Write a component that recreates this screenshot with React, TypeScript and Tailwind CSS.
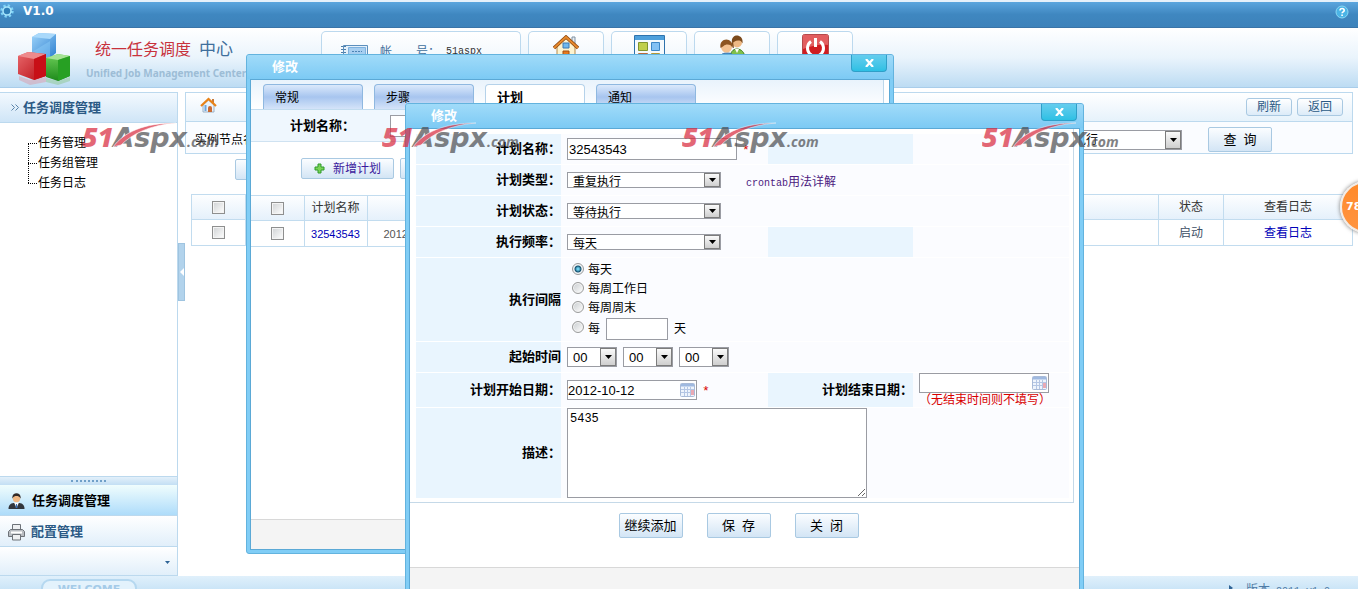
import { useState } from 'react'
import type { ReactNode } from 'react'

const plans = [{ id: 1, name: '32543543', date: '2012-10-12' }]
const tabs = ['常规', '步骤', '计划', '通知']
const intervals = ['每天', '每周工作日', '每周周末']

const labelText = 'text-[13px] leading-[16px] font-bold text-black'
const buttonLook =
  'border border-[#a9c9e2] rounded-[2px] bg-gradient-to-b from-[#fbfdff] to-[#d3e5f5] text-black whitespace-pre'

/* ---------- icons ---------- */

function GearIcon() {
  return (
    <svg width="14" height="14" viewBox="0 0 14 14" fill="none">
      <circle cx="7" cy="7" r="5.4" stroke="#7fd3f7" strokeWidth="2.6" strokeDasharray="2.2 2.04" />
      <circle cx="7" cy="7" r="4" fill="#2f7fb8" stroke="#a5e4fb" strokeWidth="1.6" />
    </svg>
  )
}

function HelpIcon() {
  return (
    <svg width="14" height="14" viewBox="0 0 14 14" fill="none">
      <circle cx="7" cy="7" r="6" fill="#4bb4e6" stroke="#8ad8f5" />
      <path d="M5 5.4c0-2.6 4.2-2.5 4.2 0 0 1.5-2.1 1.4-2.1 2.8M7.1 9.6v1.4" stroke="#fff" strokeWidth="1.6" />
    </svg>
  )
}

function CubesLogo() {
  return (
    <svg width="56" height="56" viewBox="0 0 56 56">
      <defs>
        <linearGradient id="cubeBlue" x1="0" y1="0" x2="1" y2="1">
          <stop offset="0" stopColor="#9ed4fa" />
          <stop offset="1" stopColor="#2e80d0" />
        </linearGradient>
        <linearGradient id="cubeRed" x1="0" y1="0" x2="1" y2="1">
          <stop offset="0" stopColor="#e8686c" />
          <stop offset="1" stopColor="#b80d14" />
        </linearGradient>
        <linearGradient id="cubeGreen" x1="0" y1="0" x2="0" y2="1">
          <stop offset="0" stopColor="#6cce58" />
          <stop offset="1" stopColor="#1d8a1b" />
        </linearGradient>
      </defs>
      <path d="M1 46l11 4 16-3v5l-16 3-11-5z" fill="#e08a96" opacity=".4" />
      <path d="M28 48l12 3 12-4v4l-12 4-12-3z" fill="#8ec790" opacity=".5" />
      <path d="M14 7l7-4 17 1v19l-6 5-18-1z" fill="url(#cubeBlue)" />
      <path d="M14 7l7-4 17 1-6 5z" fill="#a9d9fb" />
      <path d="M14 22l18-11v17l-18-1z" fill="#8ccbf7" opacity=".5" />
      <path d="M0 26l10-4 18 2v22l-12 4L0 44z" fill="url(#cubeRed)" />
      <path d="M0 26l10-4 18 2-12 5z" fill="#ee8a8c" />
      <path d="M16 29l12-5v22l-12 4z" fill="#c80f17" />
      <path d="M28 28l12-4 12 2v20l-12 5-12-4z" fill="url(#cubeGreen)" />
      <path d="M28 28l12-4 12 2-12 4z" fill="#a5e295" />
      <path d="M40 30l12-4v20l-12 5z" fill="#27a023" />
    </svg>
  )
}

function HomeIcon({ size }: { size: number }) {
  return (
    <svg width={size} height={size} viewBox="0 0 26 26">
      <path d="M19 2h3v9h-3z" fill="#e8eef4" stroke="#7d8fa0" />
      <path d="M4 12l9-9 9 9v12H4z" fill="#fdf3cf" stroke="#b58a4b" />
      <path d="M1 13L13 2l12 11" fill="none" stroke="#8f4a12" strokeWidth="3.4" />
      <path d="M1 13L13 2l12 11" fill="none" stroke="#e88a2c" strokeWidth="1.8" />
      <path d="M10 8h6v5h-6z" fill="#6fb8ee" stroke="#3b78b4" />
      <path d="M10 16h6v8h-6z" fill="#e67a1e" stroke="#a34c10" />
    </svg>
  )
}

function SmallHomeIcon() {
  return (
    <svg width="17" height="17" viewBox="0 0 17 17">
      <path d="M12 2h2v4h-2z" fill="#c77b3d" />
      <path d="M3 8l5.5-5L14 8v7H3z" fill="#eaf3fb" stroke="#9bb1c6" />
      <path d="M1 9l7.5-7L16 9" fill="none" stroke="#e98318" strokeWidth="2.2" />
      <path d="M8 15v-4a2 2 0 014 0v4z" fill="#c96b33" />
      <path d="M4 9h3M4 11h3M4 13h3M5.500 8v6" stroke="#6ea6dc" />
    </svg>
  )
}

function CardIcon() {
  return (
    <svg width="28" height="22" viewBox="0 0 28 22">
      <path d="M3.500.5h24v21h-24z" fill="#e4f1fb" stroke="#5c8fbd" />
      <path d="M8.500 2.500h17v15h-17z" fill="#a6cef0" stroke="#7db1de" />
      <path d="M12 6.500h10M12 10.500h10" stroke="#4c83b5" strokeDasharray="2 1" />
      <path d="M1 1.500h5M1 4.500h5M1 7.500h5M1 10.500h5" stroke="#4f7ea8" strokeDasharray="2 1" />
    </svg>
  )
}

function WindowIcon() {
  return (
    <svg width="31" height="28" viewBox="0 0 31 28">
      <path d="M.5.5h30v27H.5z" fill="#f6fafd" stroke="#2f73ad" />
      <path d="M1 1h29v4H1z" fill="#4ea0dc" />
      <path d="M4.500 7.500h9v8h-9z" fill="#c0cf4b" stroke="#7f9430" />
      <path d="M17.500 7.500h8v8h-8z" fill="#83c1f4" stroke="#3d86c6" />
      <path d="M4.500 18.500h9v7h-9z" fill="#f0955a" stroke="#b86a3c" />
      <path d="M17.500 18.500h8v7h-8z" fill="#e8ce62" stroke="#b39834" />
    </svg>
  )
}

function UsersIcon() {
  return (
    <svg width="28" height="28" viewBox="0 0 28 28">
      <path d="M12 24c0-7 3-10 7-10s8 3 8 10z" fill="#7fc04a" stroke="#42821f" />
      <path d="M17 14l2 4 2-4z" fill="#fff" />
      <circle cx="19" cy="7.500" r="5" fill="#eeb985" />
      <path d="M14 8C12-2 26-2 24.500 8.500 23.500 6 22 5.500 20 5.500c-3 0-4 2-6 2.500z" fill="#7c4a1c" />
      <path d="M14 8c0 4 1 5 2 5l-1-6z" fill="#7c4a1c" />
      <path d="M1 27c0-7 3-9 8-9s8 2 8 9z" fill="#5ea3dc" stroke="#2f6ca6" />
      <circle cx="8.500" cy="12" r="5.500" fill="#f3c190" />
      <path d="M2.500 13C.5 1.500 16 1.500 14.500 13c-1-2.500-2.500-3.500-5-3.500C6 9.500 5 12 2.500 13z" fill="#8d5420" />
    </svg>
  )
}

function PowerIcon() {
  return (
    <svg width="27" height="27" viewBox="0 0 27 27">
      <rect x=".5" y=".5" width="26" height="26" rx="2" fill="#cf1d22" stroke="#b54a4c" />
      <path d="M1 1h25v10c-8-1-17 1-25 4z" fill="#ea7a7a" opacity=".7" />
      <path d="M9 7.500a8 8 0 109 0" fill="none" stroke="#fff" strokeWidth="3" />
      <path d="M13.500 4v9" stroke="#fff" strokeWidth="3" />
    </svg>
  )
}

function ManagerIcon() {
  return (
    <svg width="17" height="17" viewBox="0 0 17 17">
      <path d="M.5 16c0-4 2-5.500 5-6h6c3 .5 5 2 5 6z" fill="#33363c" />
      <path d="M6 9.500h5L8.500 15z" fill="#fff" />
      <path d="M8 11h1l.5 4h-2z" fill="#3c6fb0" />
      <circle cx="8.500" cy="5.500" r="3.700" fill="#f0b884" />
      <path d="M4.300 5.500C3.500-1.500 13.500-1.500 12.700 5.500 11.500 3.500 10 3 8.500 3S5.500 3.500 4.300 5.500z" fill="#332b28" />
    </svg>
  )
}

function PrinterIcon() {
  return (
    <svg width="17" height="17" viewBox="0 0 17 17" fill="#eef0f2" stroke="#6d7278">
      <path d="M4.500.5h8v6h-8z" />
      <path d="M2.500 5.500h12l2 2v5h-16v-5z" fill="#b9bdc2" />
      <path d="M4.500 10.500h8v5.500h-8z" />
      <path d="M3 8.500h11" stroke="#fff" strokeWidth="2" />
    </svg>
  )
}

function PlusIcon() {
  return (
    <svg width="11" height="11" viewBox="0 0 11 11">
      <path d="M4 1h3v3h3v3H7v3H4V7H1V4h3z" fill="#7ad457" stroke="#2f9a2b" />
    </svg>
  )
}

function CalendarIcon() {
  return (
    <svg width="15" height="14" viewBox="0 0 15 14">
      <rect x=".5" y=".5" width="14" height="13" rx="1" fill="#eef4fc" stroke="#a9bbd8" />
      <path d="M1 1h13v2.500H1z" fill="#9fb9e0" />
      <path d="M1 6.500h13M1 9.500h13M4.500 4v9M7.500 4v9M10.500 4v9" stroke="#b4c6e4" />
      <path d="M11 7h3v5h-3z" fill="#e9a9b4" />
    </svg>
  )
}

/* ---------- form controls ---------- */

interface SelectProps {
  id?: string
  label?: string
  value: string
  className: string
  fieldClass: string
}

function Select({ id, label, value, className, fieldClass }: SelectProps) {
  return (
    <span className={`relative block shrink-0 ${className}`}>
      <select
        id={id}
        aria-label={label}
        defaultValue={value}
        className={`block w-full h-full appearance-none rounded-none border border-[#9a9ca3] bg-white pl-[5px] text-black outline-none ${fieldClass}`}
      >
        <option>{value}</option>
      </select>
      <span className="pointer-events-none absolute inset-y-px right-px flex w-4 items-center justify-center border border-[#7c7c7c] bg-gradient-to-b from-[#fafafa] to-[#cfcfcf]">
        <svg width="7" height="4" viewBox="0 0 7 4">
          <path d="M0 0h7L3.500 4z" fill="#000" />
        </svg>
      </span>
    </span>
  )
}

function DateInput({ id, value }: { id: string; value: string }) {
  return (
    <span className="relative block w-[130px] shrink-0">
      <input
        id={id}
        type="text"
        defaultValue={value}
        className="block h-5 w-full border border-[#9a9ca3] bg-white text-[13px] text-black outline-none"
      />
      <span className="pointer-events-none absolute right-0.5 top-[3px]">
        <CalendarIcon />
      </span>
    </span>
  )
}

function Checkbox({ label }: { label: string }) {
  return (
    <input
      type="checkbox"
      aria-label={label}
      className="block mx-auto size-[13px] appearance-none border border-[#8e8f8f] bg-gradient-to-br from-[#cfd2d4] to-white shadow-[inset_0_0_0_1px_#f4f4f4] checked:from-[#3b6ea5]"
    />
  )
}

function Radio({ id, defaultChecked }: { id: string; defaultChecked?: boolean }) {
  return (
    <input
      id={id}
      type="radio"
      name="interval"
      defaultChecked={defaultChecked}
      className="mb-1 size-3 shrink-0 appearance-none rounded-full border border-[#9a9b9b] bg-gradient-to-br from-[#c8cccf] to-white shadow-[inset_0_0_0_1px_#f4f4f4] checked:bg-[radial-gradient(circle,#6fd0ee_0_1px,#14506f_3px,#e8f0f4_4px)]"
    />
  )
}

/* ---------- dialog ---------- */

interface DialogProps {
  title: string
  className: string
  onClose: () => void
  children: ReactNode
}

function Dialog({ title, className, onClose, children }: DialogProps) {
  return (
    <section
      role="dialog"
      aria-label={title}
      className={`absolute flex flex-col rounded-[3px] border border-[#63b3de] bg-[#80cdf6] px-[3px] pb-[3px] ${className}`}
    >
      <header className="-mx-[3px] flex h-6 shrink-0 items-start justify-between rounded-t-[2px] bg-gradient-to-b from-[#a0dbf9] to-[#7ccaf4] pl-[25px] pr-1.5">
        <h2 className="text-[13px] leading-[23px] font-bold text-white">{title}</h2>
        <button
          type="button"
          aria-label="关闭"
          onClick={onClose}
          className="flex h-[17px] w-9 items-center justify-center rounded-b-[4px] border border-t-0 border-[#2f9fc8] bg-gradient-to-b from-[#63cdee] to-[#2cc0e4]"
        >
          <svg width="9" height="8" viewBox="0 0 9 8">
            <path d="M1 0l7 8M8 0L1 8" stroke="#fff" strokeWidth="2.2" />
          </svg>
        </button>
      </header>
      <div className="flex flex-1 flex-col border border-[#5ba9d6] bg-white">{children}</div>
    </section>
  )
}

function PlanListDialog({ onClose }: { onClose: () => void }) {
  const [active, setActive] = useState('计划')
  return (
    <Dialog title="修改" className="left-[246px] top-[54px] h-[500px] w-[648px]" onClose={onClose}>
      <div className="mr-[5px] border-r border-[#bcd7ea]">
        <div role="tablist" className="flex gap-[11px] border-b border-[#c2dcef] bg-gradient-to-b from-[#e9f3fc] to-white pl-3 pt-1">
          {tabs.map((tab) => (
            <button
              key={tab}
              type="button"
              role="tab"
              aria-selected={tab === active}
              onClick={() => setActive(tab)}
              className={`h-[25px] w-[100px] rounded-t-[4px] border border-b-0 pl-[11px] pt-0.5 text-left text-black ${
                tab === active
                  ? 'border-[#b5d2ea] bg-white text-[13px] font-bold'
                  : 'border-[#8fb8e0] bg-gradient-to-b from-[#dbe9fb] via-[#a7c5ef] to-[#d5e4f9] text-[12px]'
              }`}
            >
              {tab}
            </button>
          ))}
        </div>
        <div className="flex h-8 items-center border-b border-[#cfe2f1] bg-[#eff7fe]">
          <label htmlFor="listName" className={`w-[104px] text-right ${labelText}`}>
            计划名称：
          </label>
          <input id="listName" type="text" className="ml-[35px] h-[22px] w-[170px] border border-[#9a9ca3] bg-white px-px outline-none" />
        </div>
      </div>
      <div className="flex gap-1.5 pl-[50px] pt-4">
        <button type="button" className={`flex h-[21px] w-[93px] items-center justify-center gap-2 ${buttonLook}`}>
          <PlusIcon />
          <span className="text-[12px] text-[#3b1a9c]">新增计划</span>
        </button>
        <button type="button" aria-label="删除计划" className={`h-[21px] w-[93px] ${buttonLook}`} />
      </div>
      <table className="mt-4 w-full table-fixed border-collapse text-center text-[12px] leading-[16px]">
        <thead>
          <tr className="h-[25px] bg-gradient-to-b from-[#fdfeff] to-[#e4f0fb] text-[#333]">
            <th className="w-[53px] border border-l-0 border-[#c2dcef] font-normal">
              <Checkbox label="全选" />
            </th>
            <th className="w-[63px] border border-[#c2dcef] font-normal">计划名称</th>
            <th className="border border-[#c2dcef]" />
          </tr>
        </thead>
        <tbody>
          {plans.map((plan) => (
            <tr key={plan.id} className="h-[26px]">
              <td className="border border-l-0 border-[#c2dcef]">
                <Checkbox label={plan.name} />
              </td>
              <td className="border border-[#c2dcef] text-[11px]">
                <a href="#plan" className="text-[#0000b8]">
                  {plan.name}
                </a>
              </td>
              <td className="border border-[#c2dcef] pl-4 text-left text-[11px] text-[#555]">{plan.date}</td>
            </tr>
          ))}
        </tbody>
      </table>
      <div className="mt-auto h-[30px] border-t border-[#d8d8d8] bg-[#f4f4f4]" />
    </Dialog>
  )
}

function LabelCell({ htmlFor, children }: { htmlFor?: string; children?: ReactNode }) {
  return (
    <div className="flex items-center justify-end bg-[#e9f5fe]">
      {children && (
        <label htmlFor={htmlFor} className={labelText}>
          {children}
        </label>
      )}
    </div>
  )
}

function FieldCell({ wide, children }: { wide?: boolean; children?: ReactNode }) {
  return (
    <div className={`flex items-center bg-[#fbfcff] pl-1.5 ${wide ? 'col-span-3' : ''}`}>{children}</div>
  )
}

const Required = () => (
  <span className="ml-[5px] pt-1 font-['Liberation_Mono'] text-[13px] leading-[16px] text-[#d80000]">*</span>
)

function PlanFormDialog({ onClose }: { onClose: () => void }) {
  const planSelect = 'h-4 w-[154px]'
  const planSelectText = 'pt-0.5 text-[12px] leading-[14px]'
  return (
    <Dialog title="修改" className="left-[405px] top-[103px] w-[679px]" onClose={onClose}>
      <form className="flex flex-col" onSubmit={(e) => e.preventDefault()}>
        <div className="mr-[5px] grid grid-cols-[145px_207px_145px_1fr] grid-rows-[30px_30px_30px_30px_83px_30px_34px_90px] gap-y-px border-b border-r border-[#c5d9e8] pb-1 pl-1.5 pr-1 pt-[5px]">
          <LabelCell htmlFor="planName">计划名称：</LabelCell>
          <FieldCell>
            <input
              id="planName"
              type="text"
              defaultValue="32543543"
              className="h-[22px] w-[170px] border border-[#9a9ca3] bg-white px-px text-[13px] text-black outline-none"
            />
            <Required />
          </FieldCell>
          <LabelCell />
          <FieldCell />

          <LabelCell htmlFor="planType">计划类型：</LabelCell>
          <FieldCell wide>
            <Select id="planType" value="重复执行" className={planSelect} fieldClass={planSelectText} />
            <a href="#crontab" className="ml-[25px] pt-1 text-[12px] text-[#4b1a80]">
              <span className="font-['Liberation_Mono'] text-[10px]">crontab</span>用法详解
            </a>
          </FieldCell>

          <LabelCell htmlFor="planState">计划状态：</LabelCell>
          <FieldCell wide>
            <Select id="planState" value="等待执行" className={planSelect} fieldClass={planSelectText} />
          </FieldCell>

          <LabelCell htmlFor="planRate">执行频率：</LabelCell>
          <FieldCell>
            <Select id="planRate" value="每天" className={planSelect} fieldClass={planSelectText} />
          </FieldCell>
          <LabelCell />
          <FieldCell />

          <LabelCell htmlFor="interval0">执行间隔</LabelCell>
          <FieldCell wide>
            <div role="radiogroup" aria-label="执行间隔" className="flex flex-col pl-[5px] pt-0.5 text-[12px] leading-[19px] text-black">
              {intervals.map((item, idx) => (
                <span key={item} className="flex items-center gap-1">
                  <Radio id={`interval${idx}`} defaultChecked={idx === 0} />
                  <label htmlFor={`interval${idx}`}>{item}</label>
                </span>
              ))}
              <span className="flex items-center gap-1">
                <Radio id="intervalDays" />
                <label htmlFor="intervalDays">每</label>
                <input
                  type="text"
                  aria-label="间隔天数"
                  className="mx-0.5 h-[22px] w-[62px] border border-[#9a9ca3] bg-white px-px text-[13px] outline-none"
                />
                <span>天</span>
              </span>
            </div>
          </FieldCell>

          <LabelCell htmlFor="startHour">起始时间</LabelCell>
          <FieldCell wide>
            <div className="flex gap-1.5">
              <Select id="startHour" value="00" className="h-5 w-[50px]" fieldClass="text-[13px]" />
              <Select label="分" value="00" className="h-5 w-[50px]" fieldClass="text-[13px]" />
              <Select label="秒" value="00" className="h-5 w-[50px]" fieldClass="text-[13px]" />
            </div>
          </FieldCell>

          <LabelCell htmlFor="beginDate">计划开始日期：</LabelCell>
          <FieldCell>
            <DateInput id="beginDate" value="2012-10-12" />
            <Required />
          </FieldCell>
          <LabelCell htmlFor="endDate">计划结束日期：</LabelCell>
          <FieldCell>
            <div>
              <DateInput id="endDate" value="" />
              <p className="whitespace-nowrap text-[12px] leading-[14px] text-[#d80000]">（无结束时间则不填写）</p>
            </div>
          </FieldCell>

          <LabelCell htmlFor="remark">描述：</LabelCell>
          <FieldCell wide>
            <textarea
              id="remark"
              defaultValue="5435"
              className="block h-full w-[300px] border border-[#9a9ca3] bg-white px-0.5 py-[3px] font-['Liberation_Mono'] text-[12px] leading-[14px] text-black outline-none"
            />
          </FieldCell>
        </div>

        <div className="flex justify-center gap-6 pb-[29px] pt-[10px] pr-3 text-[13px]">
          <button type="button" className={`h-[25px] w-16 ${buttonLook}`}>继续添加</button>
          <button type="submit" className={`h-[25px] w-16 ${buttonLook}`}>{'保  存'}</button>
          <button type="button" onClick={onClose} className={`h-[25px] w-16 ${buttonLook}`}>{'关  闭'}</button>
        </div>
        <div className="h-[30px] border-t border-[#d8d8d8] bg-[#f4f4f4]" />
      </form>
    </Dialog>
  )
}

/* ---------- page ---------- */

function TopBar() {
  return (
    <div className="flex h-7 shrink-0 items-start justify-between border-b border-t-2 border-b-[#3a74a8] border-t-[#e6f1fa] bg-gradient-to-b from-[#5ba6de] via-[#3f87c0] to-[#3d82ba] pr-[9px] pt-0.5">
      <div className="flex items-start gap-[9px]">
        <GearIcon />
        <span className="font-['DejaVu_Sans'] text-[12px] leading-[14px] font-bold text-white">V1.0</span>
      </div>
      <button type="button" aria-label="帮助" className="pt-px">
        <HelpIcon />
      </button>
    </div>
  )
}

function Header() {
  const box = 'flex justify-center h-full rounded-t-[5px] border border-b-0 border-[#bcd9ee] bg-gradient-to-b from-white to-[#e2f0fa]'
  return (
    <header className="flex h-[60px] shrink-0 border-b border-[#a9cdea] bg-gradient-to-b from-white via-[#eaf4fc] to-[#bddcf3]">
      <div className="flex w-[321px] shrink-0 pl-[18px] pt-0.5">
        <CubesLogo />
        <div className="pl-3 pt-[10px]">
          <h1 className="flex gap-2 pl-[9px] text-[16px] leading-[20px] text-[#c8323c]">
            统一任务调度 <span className="text-[17px] text-[#3f6f9c]">中心</span>
          </h1>
          <p className="mt-1 whitespace-nowrap font-['Noto_Sans'] text-[10px] leading-[18px] font-bold text-[#9dbdd6]">
            Unified Job Management Center
          </p>
        </div>
      </div>
      <nav className="flex gap-[7px] pt-[3px]">
        <div className={`w-[200px] ${box}`}>
          <div className="flex w-full items-start gap-3 pl-[18px] pt-[13px] text-[12px] leading-[14px] text-[#3f6f9c]">
            <CardIcon />
            <span>帐</span>
            <span className="ml-3">号：</span>
            <span className="-ml-1.5 font-['Liberation_Mono'] text-[10px] text-[#333]">51aspx</span>
          </div>
        </div>
        <a href="#home" aria-label="首页" className={`w-[76px] pt-[3px] ${box}`}><HomeIcon size={26} /></a>
        <a href="#desk" aria-label="桌面" className={`w-[76px] pt-[3px] ${box}`}><WindowIcon /></a>
        <a href="#users" aria-label="用户" className={`w-[76px] pt-[3px] ${box}`}><UsersIcon /></a>
        <a href="#exit" aria-label="退出" className={`w-[76px] pt-0.5 ${box}`}><PowerIcon /></a>
      </nav>
    </header>
  )
}

function Sidebar() {
  return (
    <aside className="flex w-[178px] shrink-0 flex-col border-r border-t border-[#bcd9ee]">
      <h2 className="flex h-[30px] items-center gap-1 border-b border-[#bcd9ee] bg-gradient-to-b from-[#f3f9fe] to-[#cfe5f7] pl-[11px] text-[13px] font-bold text-[#2b5a85]">
        <svg width="8" height="7" viewBox="0 0 8 7" fill="none" stroke="#5a83a8">
          <path d="M.5.5l3 3-3 3M4.500.5l3 3-3 3" />
        </svg>
        任务调度管理
      </h2>
      <ul className="relative ml-7 mt-[10px] text-[12px] leading-[20px] text-black">
        <li className="absolute bottom-[10px] left-0 top-[10px] border-l border-dotted border-black" aria-hidden="true" />
        {['任务管理', '任务组管理', '任务日志'].map((item) => (
          <li key={item} className="flex items-center gap-px">
            <span className="w-[9px] border-t border-dotted border-black" />
            <a href="#task">{item}</a>
          </li>
        ))}
      </ul>
      <div className="mt-auto text-[13px] font-bold">
        <div className="flex h-[9px] items-center justify-center border-t border-[#bcd9ee] bg-gradient-to-b from-[#e3f0fa] to-[#c3dff4]">
          <span className="w-[35px] border-t-2 border-dotted border-[#6f9fc8]" />
        </div>
        <a href="#jobs" className="flex h-[31px] items-center gap-[7px] border-b border-[#bcd9ee] bg-gradient-to-b from-[#f0fdfd] to-[#aedcfa] pl-2 pt-0.5 text-black">
          <ManagerIcon />
          任务调度管理
        </a>
        <a href="#config" className="flex h-[31px] items-center gap-1.5 border-b border-[#bcd9ee] bg-gradient-to-b from-white to-[#e1effa] pl-2 pt-0.5 text-[#2b5a85]">
          <PrinterIcon />
          配置管理
        </a>
        <div className="flex h-[29px] items-center justify-end border-b border-[#bcd9ee] bg-gradient-to-b from-white to-[#e1effa] pr-[7px] pt-0.5">
          <svg width="5" height="3" viewBox="0 0 5 3">
            <path d="M0 0h5L2.500 3z" fill="#2f6496" />
          </svg>
        </div>
      </div>
    </aside>
  )
}

function Content() {
  const smallButton = 'h-[18px] w-[46px] rounded-[3px] border border-[#a9c9e2] bg-gradient-to-b from-white to-[#dcebf8] text-[12px] leading-[16px] text-[#2b5a85]'
  const cell = 'border border-[#c2dcef] font-normal'
  return (
    <main className="min-w-0 flex-1 pr-[5px]">
      <div className="border border-[#bcd9ee]">
        <div className="flex h-[29px] items-center justify-between border-b border-[#bcd9ee] bg-gradient-to-b from-white to-[#e6f2fb] pl-[14px] pr-[9px]">
          <a href="#home" aria-label="首页" className="pb-1">
            <SmallHomeIcon />
          </a>
          <div className="flex gap-[5px]">
            <button type="button" className={smallButton}>刷新</button>
            <button type="button" className={smallButton}>返回</button>
          </div>
        </div>
        <div className="flex h-[31px] items-center justify-between bg-[#fafcff] pl-[9px] pr-20 pt-1">
          <label htmlFor="nodeState" className="text-[12px] text-black">实例节点名称：</label>
          <div className="flex items-center gap-[26px]">
            <Select id="nodeState" value="等待执行" className="h-5 w-[138px]" fieldClass="text-[12px]" />
            <button type="button" className={`h-[25px] w-16 text-[13px] ${buttonLook}`}>{'查  询'}</button>
          </div>
        </div>
      </div>
      <div className="pl-[50px] pt-[5px]">
        <button type="button" aria-label="新增任务" className={`block h-[21px] w-[93px] ${buttonLook}`} />
      </div>
      <div className="pl-1.5 pt-[14px]">
        <table className="w-full table-fixed border-collapse text-center text-[12px] leading-[16px]">
          <thead>
            <tr className="h-[25px] bg-gradient-to-b from-[#fdfeff] to-[#e4f0fb] text-[#333]">
              <th className={`w-[54px] ${cell}`}><Checkbox label="全选任务" /></th>
              <th className={cell} />
              <th className={`w-[65px] ${cell}`}>状态</th>
              <th className={`w-[129px] ${cell}`}>查看日志</th>
            </tr>
          </thead>
          <tbody>
            <tr className="h-[26px] text-[#3d4f66]">
              <td className={cell}><Checkbox label="任务" /></td>
              <td className={cell} />
              <td className={cell}>启动</td>
              <td className={cell}><a href="#log" className="text-[#0000b8]">查看日志</a></td>
            </tr>
          </tbody>
        </table>
      </div>
    </main>
  )
}

function Footer() {
  return (
    <footer className="flex h-[13px] shrink-0 justify-between overflow-hidden bg-gradient-to-b from-[#e0f0fb] to-[#cbe5f7] pl-[41px] pr-7 pt-[3px]">
      <span className="h-5 w-24 rounded-[9px] border-2 border-[#b5d8f0] bg-[#e3f2fc] text-center font-['DejaVu_Sans'] text-[11px] leading-[17px] font-bold text-[#a5cbe8]">
        WELCOME
      </span>
      <span className="flex h-5 items-start gap-3 pt-1 text-[12px] leading-[14px] text-[#4f7ba5]">
        <svg width="5" height="8" viewBox="0 0 5 8">
          <path d="M0 2l4 3-4 3z" fill="#2f6496" />
        </svg>
        <span>
          版本<span className="font-['Liberation_Mono'] text-[10px]"> 2011 v1.0</span>
        </span>
      </span>
    </footer>
  )
}

function Watermark() {
  return (
    <div className="relative w-[300px] shrink-0 whitespace-nowrap leading-[30px] font-bold italic opacity-70">
      <span className="font-['Open_Sans'] text-[27px] font-extrabold text-[#d8283c]">51</span>
      <span className="font-['DejaVu_Sans'] text-[27px] text-[#4c4c50]">Aspx</span>
      <span className="font-['Open_Sans'] text-[14px] text-[#4c4c50]">.com</span>
      <svg className="absolute left-[30px] top-0" width="66" height="28" viewBox="0 0 66 28">
        <path d="M1 25C12 10 32 1 64 1 38 3 20 12 9 23z" fill="#d8283c" stroke="#fff" strokeWidth=".6" />
      </svg>
    </div>
  )
}

export default function App() {
  const [listOpen, setListOpen] = useState(true)
  const [formOpen, setFormOpen] = useState(true)

  return (
    <div className="relative flex h-screen flex-col overflow-hidden bg-white font-['Liberation_Sans','Noto_Sans_CJK_SC',sans-serif]">
      <TopBar />
      <Header />
      <div className="flex min-h-0 flex-1 pt-1">
        <Sidebar />
        <div className="flex w-[7px] shrink-0 items-center pb-[60px]">
          <button type="button" aria-label="收起" className="mb-16 flex h-[58px] w-[7px] items-center justify-center border border-[#9fc4e0] bg-[#b2d3ec]">
            <svg width="4" height="8" viewBox="0 0 4 8">
              <path d="M4 0v8L0 4z" fill="#fff" />
            </svg>
          </button>
        </div>
        <Content />
      </div>
      <Footer />

      {listOpen && <PlanListDialog onClose={() => setListOpen(false)} />}
      {formOpen && <PlanFormDialog onClose={() => setFormOpen(false)} />}

      {/* 加速球 */}
      <div className="absolute -right-[34px] top-[181px] flex size-[52px] items-center rounded-full border-2 border-[#f3ece6] bg-gradient-to-b from-[#ff8a2a] to-[#ff9440] pl-1 font-['DejaVu_Sans'] text-[11px] font-bold text-white shadow-[0_0_4px_#777]">
        78
      </div>

      <div className="pointer-events-none absolute left-[82px] top-[122px] flex" aria-hidden="true">
        <Watermark />
        <Watermark />
        <Watermark />
        <Watermark />
      </div>
    </div>
  )
}
